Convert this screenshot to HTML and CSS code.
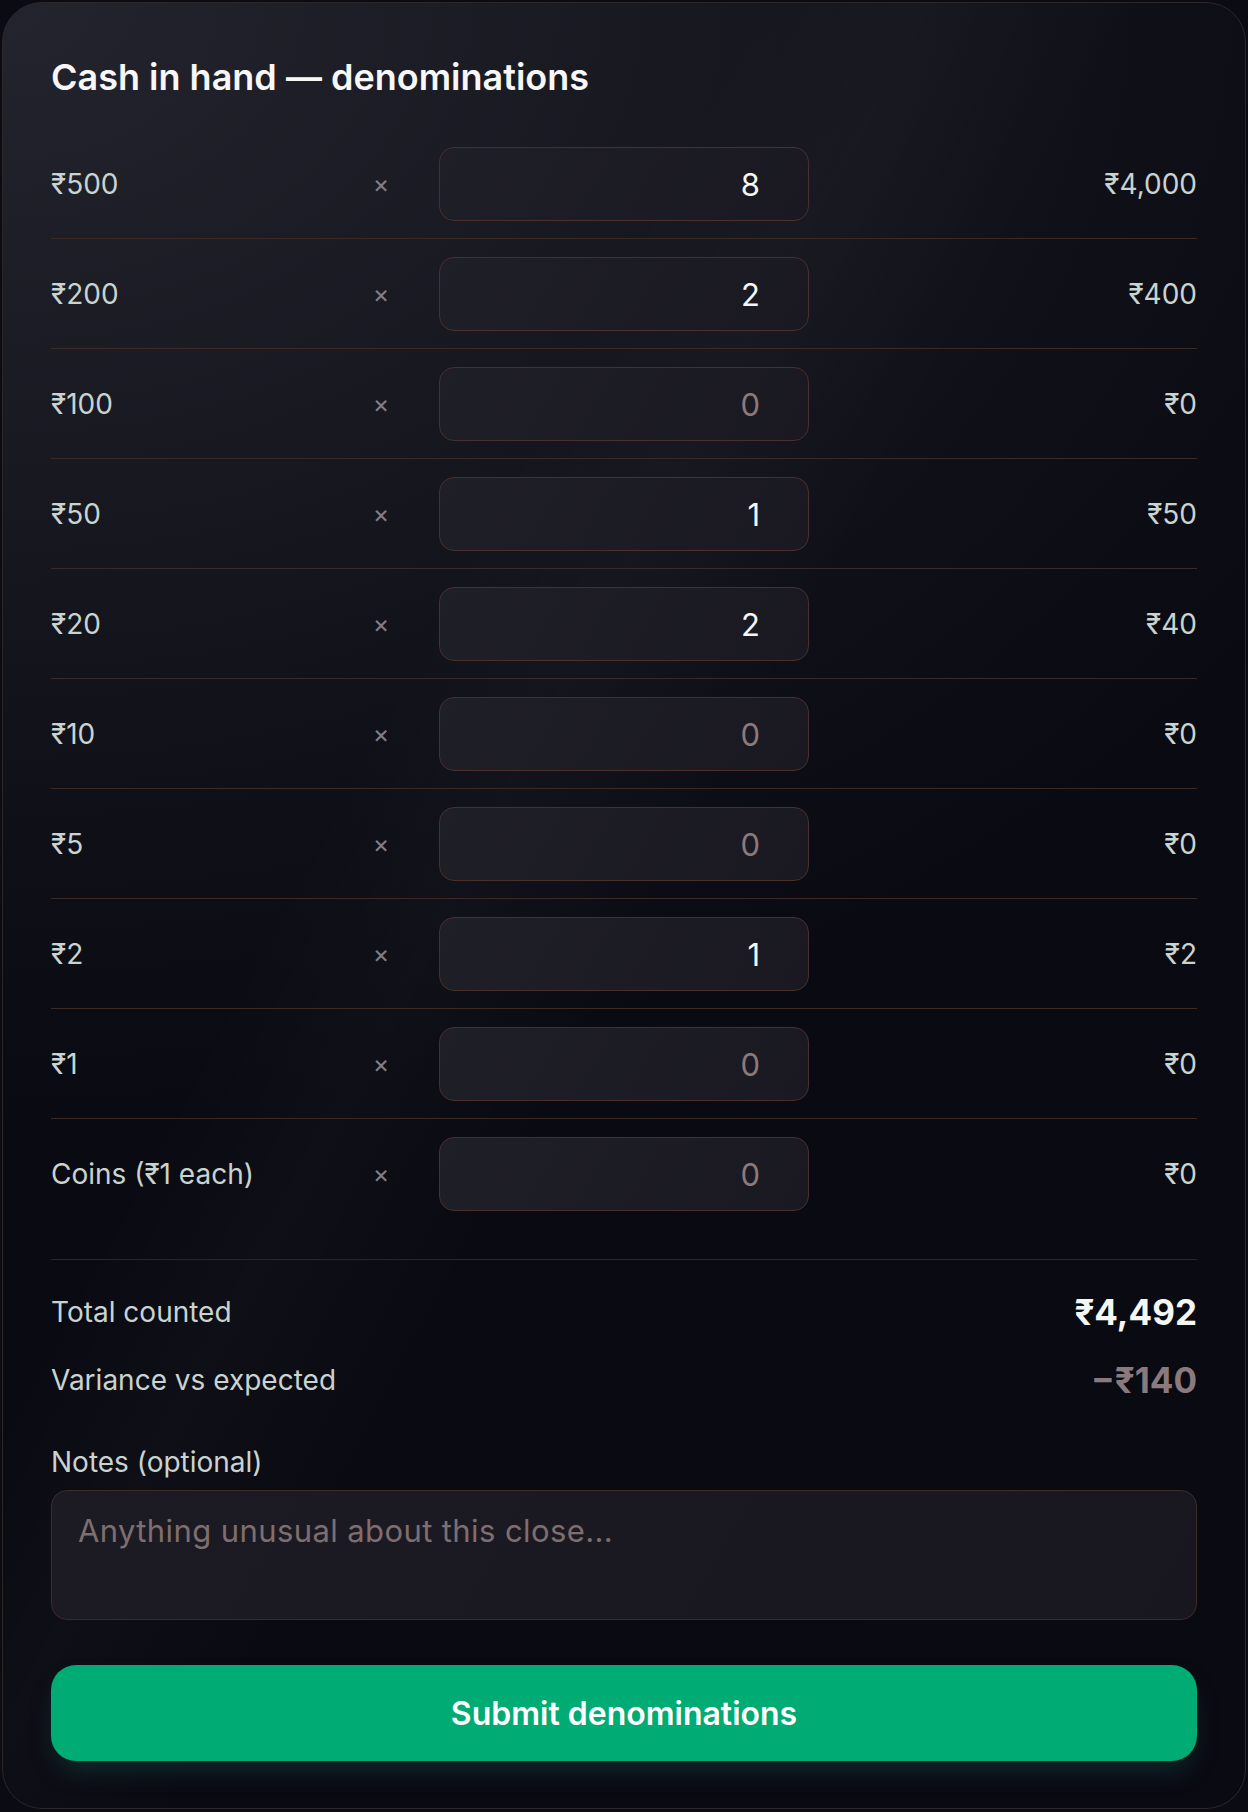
FILE: index.html
```html
<!DOCTYPE html>
<html>
	<head>
		<title>Cash in hand</title>
		<link rel="stylesheet" href="styles.css">
	</head>
	<body>
		<form class="card">
			<h1>Cash in hand — denominations</h1>
			<div class="denoms">
				<div class="row">
					<span class="label">₹500</span>
					<span class="times">×</span>
					<input class="count" type="text" inputmode="numeric" value="8" placeholder="0">
					<span class="amount">₹4,000</span>
				</div>
				<div class="row">
					<span class="label">₹200</span>
					<span class="times">×</span>
					<input class="count" type="text" inputmode="numeric" value="2" placeholder="0">
					<span class="amount">₹400</span>
				</div>
				<div class="row">
					<span class="label">₹100</span>
					<span class="times">×</span>
					<input class="count" type="text" inputmode="numeric" placeholder="0">
					<span class="amount">₹0</span>
				</div>
				<div class="row">
					<span class="label">₹50</span>
					<span class="times">×</span>
					<input class="count" type="text" inputmode="numeric" value="1" placeholder="0">
					<span class="amount">₹50</span>
				</div>
				<div class="row">
					<span class="label">₹20</span>
					<span class="times">×</span>
					<input class="count" type="text" inputmode="numeric" value="2" placeholder="0">
					<span class="amount">₹40</span>
				</div>
				<div class="row">
					<span class="label">₹10</span>
					<span class="times">×</span>
					<input class="count" type="text" inputmode="numeric" placeholder="0">
					<span class="amount">₹0</span>
				</div>
				<div class="row">
					<span class="label">₹5</span>
					<span class="times">×</span>
					<input class="count" type="text" inputmode="numeric" placeholder="0">
					<span class="amount">₹0</span>
				</div>
				<div class="row">
					<span class="label">₹2</span>
					<span class="times">×</span>
					<input class="count" type="text" inputmode="numeric" value="1" placeholder="0">
					<span class="amount">₹2</span>
				</div>
				<div class="row">
					<span class="label">₹1</span>
					<span class="times">×</span>
					<input class="count" type="text" inputmode="numeric" placeholder="0">
					<span class="amount">₹0</span>
				</div>
				<div class="row">
					<span class="label">Coins (₹1 each)</span>
					<span class="times">×</span>
					<input class="count" type="text" inputmode="numeric" placeholder="0">
					<span class="amount">₹0</span>
				</div>
			</div>
			<div class="summary">
				<div class="line">
					<span>Total counted</span>
					<strong class="total">₹4,492</strong>
				</div>
				<div class="line">
					<span>Variance vs expected</span>
					<strong class="variance">−₹140</strong>
				</div>
			</div>
			<label class="notes">
				<span>Notes (optional)</span>
				<textarea placeholder="Anything unusual about this close..."></textarea>
			</label>
			<button type="submit">Submit denominations</button>
		</form>
	</body>
</html>
```

FILE: styles.css
```css
html, body {
	margin: 0;
	background: #0b0b13;
}
body {
	padding: 2px;
	font-family: Inter, "Noto Sans", sans-serif;
	color: #c9d3cf;
}

.card {
	box-sizing: border-box;
	width: 1244px;
	height: 1807px;
	padding: 54px 48px 46px;
	border: 1px solid #2e2629;
	border-radius: 40px;
	background:
		linear-gradient(118deg, rgba(255,255,255,0) 34%, rgba(255,255,255,0.018) 42%, rgba(255,255,255,0) 52%),
		radial-gradient(125% 62% at 0% 0%, #24242e 0%, #191922 40%, #0f0f18 75%, #0a0a12 100%),
		#0a0a12;
}

h1 {
	margin: 0 0 31px;
	font-size: 36px;
	line-height: 41px;
	font-weight: 600;
	color: #f6f7f6;
}

.row {
	display: grid;
	grid-template-columns: 272px 116px 370px 1fr;
	align-items: center;
	padding: 18px 0 17px;
	border-bottom: 1px solid #3a2a26;
}
.row:last-child {
	border-bottom: 0;
}
.label, .amount {
	font-size: 28px;
}
.times {
	text-align: center;
	font-size: 25px;
	color: #8c7b7c;
}
.amount {
	text-align: right;
}

.count {
	box-sizing: border-box;
	width: 370px;
	height: 74px;
	padding: 0 48px 0 20px;
	border: 1px solid #4a302a;
	border-radius: 15px;
	background: linear-gradient(120deg, #1f1f28, #1a1922);
	font-family: inherit;
	font-size: 31px;
	color: #f5f6f5;
	text-align: right;
	outline: none;
}
.count::placeholder {
	color: #8c7a7b;
}

.summary {
	margin-top: 31px;
	padding-top: 32px;
	border-top: 1px solid #2f2526;
}
.line {
	display: flex;
	justify-content: space-between;
	align-items: center;
	height: 40px;
	font-size: 28px;
}
.line + .line {
	margin-top: 28px;
}
.line strong {
	font-size: 35px;
	font-weight: 700;
}
.total {
	color: #f4f6f3;
}
.variance {
	color: #8a7a7e;
}

.notes {
	display: block;
	margin-top: 44px;
}
.notes span {
	display: block;
	font-size: 28px;
	line-height: 36px;
	margin-bottom: 10px;
}
textarea {
	box-sizing: border-box;
	display: block;
	width: 100%;
	height: 130px;
	padding: 20px 26px;
	border: 1px solid #3e2b27;
	border-radius: 16px;
	background: linear-gradient(120deg, #1c1b23, #18171f);
	font-family: inherit;
	font-size: 31px;
	letter-spacing: 0.4px;
	line-height: 40px;
	color: #f5f6f5;
	resize: none;
	outline: none;
}
textarea::placeholder {
	color: #7e6e6f;
}

button {
	display: block;
	width: 100%;
	height: 96px;
	margin-top: 45px;
	border: 0;
	border-radius: 25px;
	background: #00ab74;
	font-family: inherit;
	font-size: 32px;
	font-weight: 600;
	color: #ffffff;
	box-shadow: 0 14px 26px -6px rgba(20, 110, 95, 0.35);
}
```
